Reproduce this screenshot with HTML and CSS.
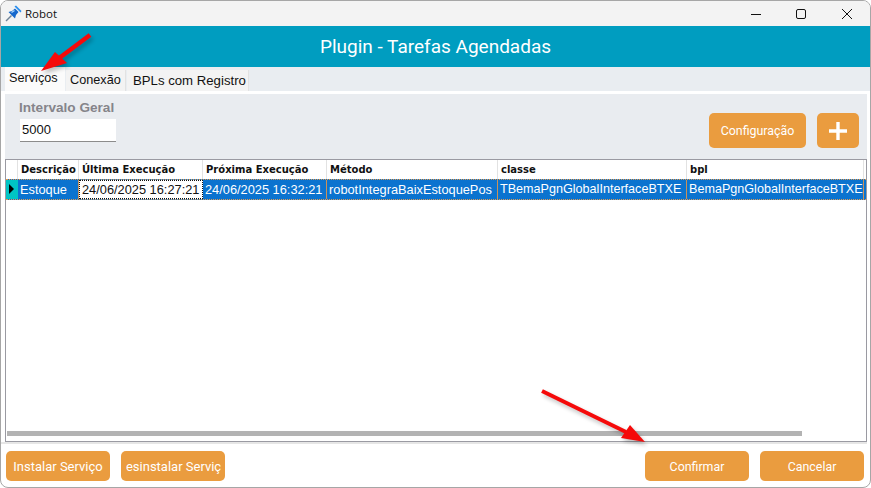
FILE: index.html
```html
<!DOCTYPE html>
<html lang="pt">
<head>
<meta charset="utf-8">
<title>Robot</title>
<link rel="stylesheet" href="styles.css">
</head>
<body>
<div class="window">
  <header class="titlebar">
    <svg class="pin" width="17" height="17" viewBox="0 0 17 17">
      <path d="M1 16 L6.5 10.5" stroke="#6f8296" stroke-width="1.4" fill="none"/>
      <path d="M3.5 7 L10 13.5 L11 10 L13.5 7 L10 3.5 L7 6 Z" fill="#1668cc"/>
      <path d="M9.5 1.5 L15.5 7.5 L16.5 6 L11 0.5 Z" fill="#2b8fee"/>
      <path d="M6.5 7.5 L9.5 5.5" stroke="#a8d6ff" stroke-width="1.3" fill="none"/>
    </svg>
    <span class="wintitle">Robot</span>
    <div class="winctrls">
      <svg width="46" height="26" viewBox="0 0 46 26"><path d="M19 13.5H29" stroke="#111" stroke-width="1"/></svg>
      <svg width="46" height="26" viewBox="0 0 46 26"><rect x="18.5" y="8.5" width="9" height="9" rx="1.5" fill="none" stroke="#111"/></svg>
      <svg width="46" height="26" viewBox="0 0 46 26"><path d="M18 8L28 18M28 8L18 18" stroke="#111" stroke-width="1"/></svg>
    </div>
  </header>
  <div class="banner">Plugin - Tarefas Agendadas</div>
  <nav class="tabs">
    <span class="tab active">Serviços</span>
    <span class="tab">Conexão</span>
    <span class="tab">BPLs com Registro</span>
  </nav>
  <main class="tabpage">
    <section class="toolbar">
      <div class="field">
        <label class="field-label">Intervalo Geral</label>
        <div class="input">5000</div>
      </div>
      <div class="toolbar-actions">
        <button class="btn btn-config">Configuração</button>
        <button class="btn btn-plus"><svg width="20" height="20" viewBox="0 0 20 20"><path d="M10 1V19M1 10H19" stroke="#fff" stroke-width="3.4"/></svg></button>
      </div>
    </section>
    <section class="grid">
      <div class="row head">
        <div class="cell ind"></div>
        <div class="cell">Descrição</div>
        <div class="cell">Última Execução</div>
        <div class="cell">Próxima Execução</div>
        <div class="cell">Método</div>
        <div class="cell">classe</div>
        <div class="cell">bpl</div>
      </div>
      <div class="row data">
        <div class="cell ind"><span class="caret"></span></div>
        <div class="cell">Estoque</div>
        <div class="cell current">24/06/2025 16:27:21</div>
        <div class="cell">24/06/2025 16:32:21</div>
        <div class="cell">robotIntegraBaixEstoquePos</div>
        <div class="cell long">TBemaPgnGlobalInterfaceBTXE</div>
        <div class="cell long">BemaPgnGlobalInterfaceBTXE</div>
      </div>
      <div class="grid-space"></div>
      <div class="hscroll"><div class="hthumb"></div></div>
    </section>
  </main>
  <footer class="footer">
    <div class="footer-group">
      <button class="btn btn-foot btn-wide">Instalar Serviço</button>
      <button class="btn btn-foot btn-wide"><span class="clip"><span class="clip-text">Desinstalar Serviço</span></span></button>
    </div>
    <div class="footer-group">
      <button class="btn btn-foot">Confirmar</button>
      <button class="btn btn-foot">Cancelar</button>
    </div>
  </footer>
  <svg class="arrows" width="871" height="488" viewBox="0 0 871 488">
    <defs>
      <filter id="sh" x="-20%" y="-20%" width="140%" height="140%"><feGaussianBlur stdDeviation="2"/></filter>
    </defs>
    <g opacity=".25" filter="url(#sh)" transform="translate(2 3)">
      <path d="M90 35L58 59" stroke="#000" stroke-width="4.5"/>
      <path d="M41 71L55 52L67 63Z"/>
      <path d="M542 391L626 432" stroke="#000" stroke-width="4"/>
      <path d="M645 442L621 438L630 425Z"/>
    </g>
    <path d="M90 35L58 59" stroke="#f50a0a" stroke-width="4.5"/>
    <path d="M41 71L55 52L67 63Z" fill="#f50a0a"/>
    <path d="M542 391L626 432" stroke="#f50a0a" stroke-width="4"/>
    <path d="M645 442L621 438L630 425Z" fill="#f50a0a"/>
  </svg>
</div>
</body>
</html>
```
FILE: styles.css
```css
* { box-sizing: border-box; }
html, body { margin: 0; padding: 0; background: #fff; }
.window {
  position: relative;
  width: 871px;
  height: 488px;
  border: 1px solid #a6a6a6;
  border-radius: 8px;
  overflow: hidden;
  background: #fff;
  display: flex;
  flex-direction: column;
  font-family: "Liberation Sans", Arial, sans-serif;
}
.titlebar {
  height: 25px;
  flex: none;
  background: #f3f3f3;
  display: flex;
  align-items: center;
  padding-left: 4px;
  gap: 3px;
}
.wintitle { font: 11.5px "Open Sans", sans-serif; color: #111; }
.winctrls { margin-left: auto; display: flex; }
.winctrls svg { display: block; }
.banner {
  height: 41px;
  flex: none;
  background: #009dc0;
  color: #fff;
  font: 19px/41px Roboto, sans-serif;
  text-align: center;
}
.tabs {
  height: 24px;
  flex: none;
  background: #e9edf1;
  display: flex;
  align-items: flex-end;
  padding-left: 4px;
  gap: 1px;
}
.tab {
  height: 21px;
  background: #f3f3f3;
  font: 12.7px/21px "Liberation Sans", sans-serif;
  color: #111;
  border-right: 1px solid #e2e2e2;
  white-space: nowrap;
}
.tab:nth-child(2) { width: 60px; padding-left: 4px; }
.tab:nth-child(3) { width: 122px; padding-left: 6px; font-size: 13.2px; }
.tab.active {
  width: 60px;
  height: 24px;
  background: #fbfbfb;
  padding-left: 4px;
  line-height: 22px;
  border-right: 0;
}
.tabpage {
  height: 353px;
  flex: none;
  background: #fff;
  margin: 0 3px 0 0;
  padding: 3px 0 0 4px;
  display: flex;
  flex-direction: column;
  border-bottom: 2px solid #e6e6e6;
}
.toolbar {
  height: 65px;
  flex: none;
  background: #e9ecf0;
  display: flex;
  justify-content: space-between;
  padding: 6px 8px 0 14px;
}
.field-label {
  display: block;
  font: bold 13.6px/16px "Liberation Sans", sans-serif;
  color: #85848a;
}
.input {
  width: 96px;
  height: 23px;
  margin: 3px 0 0 1px;
  background: #fff;
  border-bottom: 1px solid #8c8c8c;
  font: 13px/22px "Liberation Sans", sans-serif;
  color: #111;
  padding-left: 2px;
}
.toolbar-actions { display: flex; gap: 11px; padding-top: 13px; }
.btn {
  border: 0;
  background: #ea9c3f;
  color: #fff;
  border-radius: 5px;
  padding: 0;
  font: 12.4px Roboto, sans-serif;
  display: flex;
  align-items: center;
  justify-content: center;
}
.btn-wide { font-size: 13px; }
.btn-config { width: 97px; height: 35px; }
.btn-plus { width: 42px; height: 35px; }
.grid {
  flex: 1;
  background: #fff;
  border: 1px solid #9a9aa2;
  display: flex;
  flex-direction: column;
}
.row {
  display: grid;
  grid-template-columns: 12px 61px 124px 124px 171px 189px 177px;
  flex: none;
}
.head { height: 19px; }
.head .cell {
  font: bold 10px/19px "DejaVu Sans", sans-serif;
  color: #111;
  padding-left: 3px;
  border-right: 1px solid #e2e2e2;
  white-space: nowrap;
}
.data { height: 21px; background: #0b73cf; border-bottom: 1px dotted #e29a4e; border-top: 1px dotted #e29a4e; }
.data .cell {
  font: 12.8px/19px "Liberation Sans", sans-serif;
  color: #fff;
  padding-left: 2px;
  border-right: 1px solid #c9925a;
  white-space: nowrap;
}
.data .cell.long { font-size: 12.6px; }
.data .cell.current {
  background: #fff;
  color: #111;
  border: 1px dotted #111;
  line-height: 17px;
}
.data .cell.ind {
  background: #00c4c4;
  padding: 4px 0 0 3px;
  border: 0;
}
.caret {
  display: block;
  width: 0;
  height: 0;
  border-left: 5px solid #000;
  border-top: 5px solid transparent;
  border-bottom: 5px solid transparent;
}
.grid-space { flex: 1; }
.hscroll { height: 5px; margin: 0 0 5px 1px; }
.hthumb { width: 795px; height: 5px; background: #b3b3b3; }
.footer {
  flex: 1;
  display: flex;
  justify-content: space-between;
  padding: 7px 6px 0 5px;
}
.footer-group { display: flex; gap: 11px; }
.btn-foot { width: 104px; height: 30px; }
.clip { width: 95px; overflow: hidden; display: flex; justify-content: center; }
.clip-text { flex: none; white-space: nowrap; }
.arrows { position: absolute; left: -1px; top: -1px; pointer-events: none; }
```
